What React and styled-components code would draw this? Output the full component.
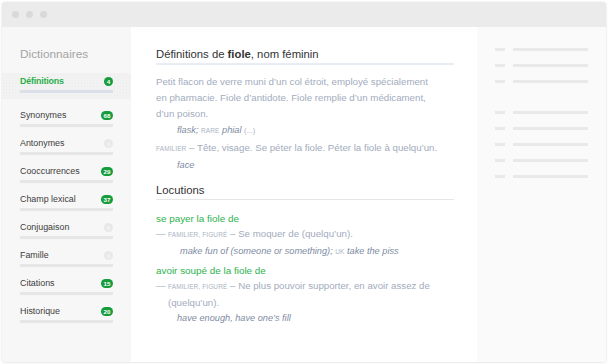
import React from "react";
import styled, { createGlobalStyle } from "styled-components";

const Global = createGlobalStyle`
  html, body { margin: 0; padding: 0; background: #ffffff; }
  body { font-family: "Liberation Sans", Arial, sans-serif; -webkit-font-smoothing: antialiased; }
`;

const Page = styled.div`
  padding: 2px;
  width: 608px;
  height: 364px;
  box-sizing: border-box;
`;

const Window = styled.div`
  width: 604px;
  height: 360px;
  display: flex;
  flex-direction: column;
  border-radius: 3px;
  overflow: hidden;
  box-shadow: 0 0 2px rgba(0, 0, 0, 0.12), 0 1px 3px rgba(0, 0, 0, 0.06);
  background: #fff;
`;

const TitleBar = styled.div`
  height: 25px;
  flex: none;
  background: #ebebeb;
  display: flex;
  align-items: center;
  gap: 7px;
  padding-left: 10px;
`;

const Dot = styled.span`
  width: 7px;
  height: 7px;
  border-radius: 50%;
  background: #d9d9d9;
`;

const Body = styled.div`
  flex: 1;
  display: flex;
  min-height: 0;
`;

const Sidebar = styled.nav`
  width: 129px;
  flex: none;
  background: #f7f7f7;
  padding-top: 19px;
  box-sizing: border-box;
`;

const SideTitle = styled.div`
  font-size: 11.8px;
  line-height: 16px;
  color: #a3a3a3;
  padding-left: 18px;
  margin-bottom: 11px;
`;

const NavList = styled.div`
  display: flex;
  flex-direction: column;
  gap: 10px;
`;

const NavItem = styled.div`
  padding: ${(p) => (p.$active ? "2px 18px 6px" : "0 18px")};
  background: ${(p) =>
    p.$active
      ? "radial-gradient(circle, rgba(0,0,0,0.025) 0.6px, transparent 0.8px) 0 0 / 3px 3px, #f2f2f2"
      : "transparent"};
`;

const NavRow = styled.div`
  display: flex;
  align-items: center;
  justify-content: space-between;
  height: 12px;
  width: 93px;
`;

const NavLabel = styled.span`
  font-size: 8.9px;
  color: ${(p) => (p.$active ? "#2aaf4b" : "#3d3d3d")};
  font-weight: ${(p) => (p.$active ? 700 : 400)};
  letter-spacing: ${(p) => (p.$active ? "-0.2px" : "0")};
`;

const Badge = styled.span`
  min-width: 9px;
  height: 9px;
  padding: 0 ${(p) => (p.$wide ? "1.5px" : "0")};
  border-radius: 5px;
  background: ${(p) => (p.$zero ? "#e8e8e8" : "#179c3b")};
  color: ${(p) => (p.$zero ? "#f6f6f6" : "#ffffff")};
  font-size: 6.2px;
  font-weight: 700;
  display: flex;
  align-items: center;
  justify-content: center;
  line-height: 9px;
`;

const NavBar = styled.div`
  margin-top: 3px;
  width: 93px;
  height: 3px;
  background: ${(p) => (p.$active ? "#dbe0e8" : "#e6e6e6")};
`;

const Main = styled.main`
  width: 346px;
  flex: none;
  box-sizing: border-box;
  padding: 19px 23px 0 25px;
  color: #a2acbd;
  font-size: 9.7px;
  line-height: 16px;
`;

const SectionTitle = styled.h2`
  margin: ${(p) => p.$mt || "0"} 0 0;
  font-size: 11.3px;
  font-weight: 400;
  line-height: 16px;
  color: #333333;
  padding-bottom: 1px;
  border-bottom: ${(p) => (p.$thick ? "2px solid #e9eef4" : "1px solid #e6e6e6")};
`;

const Para = styled.p`
  margin: ${(p) => p.$mt || "0"} 0 0;
  max-width: ${(p) => p.$max || "none"};
`;

const DefRow = styled.div`
  display: flex;
`;

const DefDash = styled.span`
  flex: none;
  width: 12px;
`;

const DefText = styled.span`
  flex: 1;
`;

const Trans = styled.p`
  margin: ${(p) => p.$mt || "0"} 0 0;
  padding-left: ${(p) => p.$indent || "21px"};
  font-style: italic;
  color: #7e8ba3;
  font-size: 9.2px;
`;

const Small = styled.span`
  font-size: 6.5px;
  text-transform: uppercase;
  color: #aab3c3;
  font-style: normal;
  letter-spacing: 0.1px;
`;

const Etc = styled.span`
  font-style: normal;
  font-size: 7.5px;
  color: #a8b1c1;
`;

const Locution = styled.div`
  margin-top: ${(p) => p.$mt || "0"};
  color: #2eb24d;
  font-size: 9.9px;
  line-height: 15px;
`;

const Right = styled.aside`
  flex: 1;
  background: #fafafa;
  padding: 21px 18px 0 18px;
  display: flex;
  flex-direction: column;
  gap: 13px;
`;

const TocRow = styled.div`
  display: flex;
  gap: 8px;
  margin-top: ${(p) => (p.$sep ? "15px" : "0")};
`;

const TocDash = styled.span`
  width: 10px;
  height: 3px;
  background: #e9e9e9;
`;

const TocLine = styled.span`
  width: 75px;
  height: 3px;
  background: #e9e9e9;
`;

const items = [
  { label: "Définitions", n: "4", active: true },
  { label: "Synonymes", n: "68" },
  { label: "Antonymes", n: "0" },
  { label: "Cooccurrences", n: "29" },
  { label: "Champ lexical", n: "37" },
  { label: "Conjugaison", n: "0" },
  { label: "Famille", n: "0" },
  { label: "Citations", n: "15" },
  { label: "Historique", n: "20" },
];

export default function App() {
  return (
    <Page>
      <Global />
      <Window>
        <TitleBar>
          <Dot />
          <Dot />
          <Dot />
        </TitleBar>
        <Body>
          <Sidebar>
            <SideTitle>Dictionnaires</SideTitle>
            <NavList>
              {items.map((it) => (
                <NavItem key={it.label} $active={it.active}>
                  <NavRow>
                    <NavLabel $active={it.active}>{it.label}</NavLabel>
                    <Badge $zero={it.n === "0"} $wide={it.n.length > 1}>
                      {it.n}
                    </Badge>
                  </NavRow>
                  <NavBar $active={it.active} />
                </NavItem>
              ))}
            </NavList>
          </Sidebar>
          <Main>
            <SectionTitle $thick>
              Définitions de <b>fiole</b>, nom féminin
            </SectionTitle>
            <Para $mt="9px" $max="278px">
              Petit flacon de verre muni d’un col étroit, employé spécialement en pharmacie. Fiole
              d’antidote. Fiole remplie d’un médicament, d’un poison.
            </Para>
            <Trans>
              flask; <Small>rare</Small> phial <Etc>(...)</Etc>
            </Trans>
            <Para $mt="1px">
              <Small>familier</Small> – Tête, visage. Se péter la fiole. Péter la fiole à quelqu’un.
            </Para>
            <Trans>face</Trans>
            <SectionTitle $mt="9px">Locutions</SectionTitle>
            <Locution $mt="11px">se payer la fiole de</Locution>
            <DefRow>
              <DefDash>—</DefDash>
              <DefText>
                <Small>familier, figuré</Small> – Se moquer de (quelqu’un).
              </DefText>
            </DefRow>
            <Trans $mt="0px" $indent="24px">
              make fun of (someone or something); <Small>uk</Small> take the piss
            </Trans>
            <Locution $mt="3px">avoir soupé de la fiole de</Locution>
            <DefRow>
              <DefDash>—</DefDash>
              <DefText>
                <Small>familier, figuré</Small> – Ne plus pouvoir supporter, en avoir assez de
                (quelqu’un).
              </DefText>
            </DefRow>
            <Trans $mt="-1px">have enough, have one’s fill</Trans>
          </Main>
          <Right>
            {[0, 1, 2, 3, 4, 5, 6, 7].map((i) => (
              <TocRow key={i} $sep={i === 3}>
                <TocDash />
                <TocLine />
              </TocRow>
            ))}
          </Right>
        </Body>
      </Window>
    </Page>
  );
}
